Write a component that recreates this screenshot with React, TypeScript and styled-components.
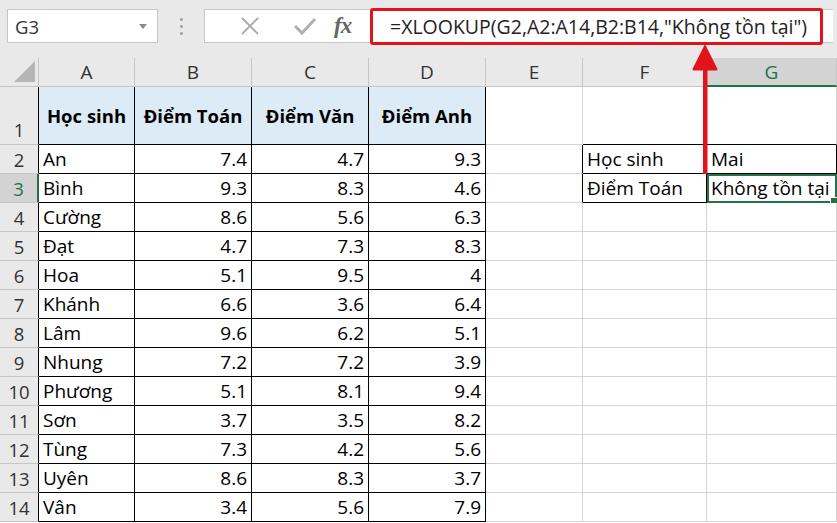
import React from 'react';
import styled, {createGlobalStyle} from 'styled-components';

const GlobalStyle = createGlobalStyle`
  html, body {
    margin: 0;
    padding: 0;
    background: #ffffff;
  }
  body {
    font-family: "Open Sans", "Noto Sans", sans-serif;
  }
`;

const GREEN = '#217346';
const RED = '#e2131b';
const GRID = '#d4d4d4';

type Student = [string, string, string, string];

const students: Student[] = [
  ['An', '7.4', '4.7', '9.3'],
  ['Bình', '9.3', '8.3', '4.6'],
  ['Cường', '8.6', '5.6', '6.3'],
  ['Đạt', '4.7', '7.3', '8.3'],
  ['Hoa', '5.1', '9.5', '4'],
  ['Khánh', '6.6', '3.6', '6.4'],
  ['Lâm', '9.6', '6.2', '5.1'],
  ['Nhung', '7.2', '7.2', '3.9'],
  ['Phương', '5.1', '8.1', '9.4'],
  ['Sơn', '3.7', '3.5', '8.2'],
  ['Tùng', '7.3', '4.2', '5.6'],
  ['Uyên', '8.6', '8.3', '3.7'],
  ['Vân', '3.4', '5.6', '7.9'],
];

const columns = ['A', 'B', 'C', 'D', 'E', 'F', 'G'];

// rows are 1-based like the sheet, cols 0..6 for A..G
const rightBorder = (row: number, col: number) => {
  if (col <= 3) return '#000';
  if (row >= 2 && row <= 3 && col >= 4) return '#000';
  return GRID;
};

const bottomBorder = (row: number, col: number) => {
  if (col <= 3) return '#000';
  if (row <= 3 && col >= 5) return '#000';
  return GRID;
};

const cellText = (row: number, col: number) => {
  if (row === 1) {
    return ['Học sinh', 'Điểm Toán', 'Điểm Văn', 'Điểm Anh', '', '', ''][col];
  }
  if (col <= 3) return students[row - 2][col];
  if (row === 2) return ['', 'Học sinh', 'Mai'][col - 4];
  if (row === 3) return ['', 'Điểm Toán', 'Không tồn tại'][col - 4];
  return '';
};

export default function App() {
  const rows = Array.from({length: 14}, (_, i) => i + 1);

  return (
    <>
      <GlobalStyle/>
      <Window>
        <Toolbar>
          <NameBox>
            <span>G3</span>
            <DropCaret/>
          </NameBox>
          <Grip>
            <i/><i/><i/>
          </Grip>
          <FxButtons>
            <ToolIcon>
              <svg width="22" height="22" viewBox="0 0 22 22">
                <path d="M3 3 L19 19 M19 3 L3 19" stroke="#a8a8a8" strokeWidth="1.8" fill="none"/>
              </svg>
            </ToolIcon>
            <ToolIcon>
              <svg width="24" height="22" viewBox="0 0 24 22">
                <path d="M2 11 L9 18 L22 4" stroke="#b0b0b0" strokeWidth="3" fill="none"/>
              </svg>
            </ToolIcon>
            <FxLabel>fx</FxLabel>
          </FxButtons>
          <FormulaInput>=XLOOKUP(G2,A2:A14,B2:B14,"Không tồn tại")</FormulaInput>
        </Toolbar>

        <Sheet>
          <Corner>
            <CornerTriangle/>
          </Corner>
          {columns.map(c => (
            <ColHeader key={c} $selected={c === 'G'}>{c}</ColHeader>
          ))}

          {rows.map(row => (
            <React.Fragment key={row}>
              <RowHeader $selected={row === 3} $tall={row === 1}>{row}</RowHeader>
              {columns.map((c, col) => (
                <Cell
                  key={c}
                  $right={rightBorder(row, col)}
                  $bottom={bottomBorder(row, col)}
                  $head={row === 1 && col <= 3}
                  $align={row > 1 && col >= 1 && col <= 3 ? 'flex-end' : row === 1 ? 'center' : 'flex-start'}
                  $active={row === 3 && col === 6}
                >
                  {cellText(row, col)}
                </Cell>
              ))}
            </React.Fragment>
          ))}
        </Sheet>

        <FormulaHighlight/>
        <Arrow width="30" height="132" viewBox="0 0 30 132">
          <rect x="13" y="22" width="4.5" height="108" fill={RED}/>
          <path d="M15 0 L27.5 25 Q27.5 26.5 26 26.5 L4 26.5 Q2.5 26.5 2.5 25 Z" fill={RED}/>
        </Arrow>
      </Window>
    </>
  );
}

const Window = styled.div`
  position: relative;
  width: 837px;
  height: 523px;
  overflow: hidden;
  background: #ffffff;
  color: #000;
`;

const Toolbar = styled.div`
  display: flex;
  align-items: flex-start;
  height: 58px;
  padding: 9px 0 0 7px;
  box-sizing: border-box;
  background: #e9e9e9;
`;

const NameBox = styled.div`
  display: flex;
  align-items: center;
  justify-content: space-between;
  width: 151px;
  height: 34px;
  box-sizing: border-box;
  padding: 0 10px 0 7px;
  background: #fff;
  border: 1px solid #c8c8c8;
  font-size: 18.5px;
  color: #333;
`;

const DropCaret = styled.span`
  width: 0;
  height: 0;
  border-left: 4.5px solid transparent;
  border-right: 4.5px solid transparent;
  border-top: 5px solid #888;
`;

const Grip = styled.div`
  display: flex;
  flex-direction: column;
  gap: 4px;
  width: 46px;
  height: 34px;
  align-items: center;
  justify-content: center;

  i {
    width: 3px;
    height: 3px;
    background: #a8a8a8;
    border-radius: 1px;
  }
`;

const FxButtons = styled.div`
  display: flex;
  align-items: center;
  width: 167px;
  height: 34px;
  box-sizing: border-box;
  padding-left: 17px;
  background: #fff;
  border: 1px solid #c8c8c8;
  border-right: none;
`;

const ToolIcon = styled.span`
  display: flex;
  align-items: center;
  justify-content: center;
  width: 55px;
  height: 34px;
`;

const FxLabel = styled.span`
  font-family: "Liberation Serif", "DejaVu Serif", serif;
  font-style: italic;
  font-weight: 700;
  font-size: 23px;
  color: #666;
  margin-left: 2px;
  letter-spacing: -1px;
`;

const FormulaInput = styled.div`
  display: flex;
  align-items: center;
  flex: 0 0 462px;
  height: 34px;
  box-sizing: border-box;
  padding-left: 19px;
  background: #fff;
  border-top: 1px solid #c8c8c8;
  border-bottom: 1px solid #c8c8c8;
  font-size: 19.5px;
  color: #222;
  white-space: nowrap;
`;

const FormulaHighlight = styled.div`
  position: absolute;
  left: 370px;
  top: 8px;
  width: 453px;
  height: 37px;
  box-sizing: border-box;
  border: 3px solid ${RED};
  border-radius: 3px;
`;

const Arrow = styled.svg`
  position: absolute;
  left: 690px;
  top: 44px;
`;

const Sheet = styled.div`
  display: grid;
  grid-template-columns: 39px 96px 117px 117px 117px 97px 124px 130px;
  grid-template-rows: 29px 58px repeat(13, 29px);
  font-size: 19px;
`;

const Corner = styled.div`
  position: relative;
  background: #e9e9e9;
  border-right: 1px solid #c6c6c6;
  border-bottom: 1px solid #c6c6c6;
`;

const CornerTriangle = styled.div`
  position: absolute;
  right: 3px;
  bottom: 4px;
  width: 0;
  height: 0;
  border-left: 21px solid transparent;
  border-bottom: 21px solid #b5b5b5;
`;

const ColHeader = styled.div<{ $selected?: boolean }>`
  display: flex;
  align-items: center;
  justify-content: center;
  box-sizing: border-box;
  background: ${p => (p.$selected ? '#d3d3d3' : '#e9e9e9')};
  color: ${p => (p.$selected ? GREEN : '#333')};
  border-right: 1px solid #c6c6c6;
  border-bottom: ${p => (p.$selected ? `2px solid ${GREEN}` : '1px solid #c6c6c6')};
  font-size: 19px;
`;

const RowHeader = styled.div<{ $selected?: boolean; $tall?: boolean }>`
  display: flex;
  align-items: ${p => (p.$tall ? 'flex-end' : 'center')};
  justify-content: center;
  box-sizing: border-box;
  padding-bottom: ${p => (p.$tall ? '2px' : '0')};
  background: ${p => (p.$selected ? '#d3d3d3' : '#e9e9e9')};
  color: ${p => (p.$selected ? GREEN : '#333')};
  border-right: ${p => (p.$selected ? `2px solid ${GREEN}` : '1px solid #000')};
  border-bottom: 1px solid #c6c6c6;
  font-size: 18.5px;
`;

const Cell = styled.div<{
  $right: string;
  $bottom: string;
  $head?: boolean;
  $align: string;
  $active?: boolean;
}>`
  position: relative;
  display: flex;
  align-items: center;
  justify-content: ${p => p.$align};
  box-sizing: border-box;
  padding: 0 4px;
  background: ${p => (p.$head ? '#ddebf7' : '#fff')};
  font-weight: ${p => (p.$head ? 700 : 400)};
  font-size: ${p => (p.$head ? '18.5px' : '19px')};
  border-right: 1px solid ${p => p.$right};
  border-bottom: 1px solid ${p => p.$bottom};
  white-space: nowrap;
  outline: ${p => (p.$active ? `2px solid ${GREEN}` : 'none')};
  outline-offset: -2px;

  &::after {
    content: '';
    display: ${p => (p.$active ? 'block' : 'none')};
    position: absolute;
    right: -2px;
    bottom: -3px;
    width: 6px;
    height: 6px;
    background: ${GREEN};
    border: 1px solid #fff;
  }
`;
